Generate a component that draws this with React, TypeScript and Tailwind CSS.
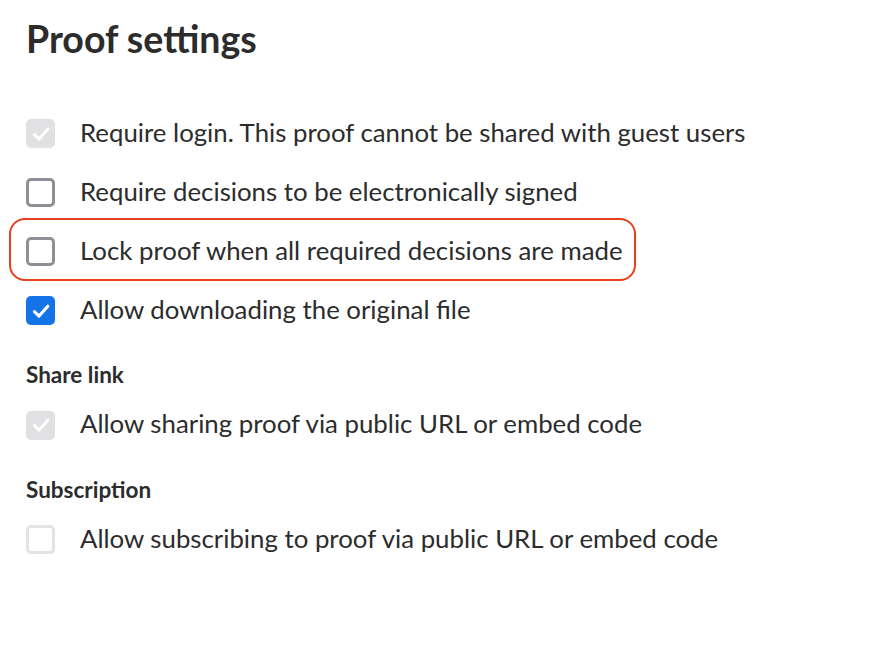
import type { ReactNode } from 'react';

type BoxState = 'checked' | 'unchecked' | 'disabledChecked' | 'disabledUnchecked';

function Check() {
  return (
    <svg width="22" height="22" viewBox="0 0 20 20" fill="none">
      <path
        d="M4 10.5 L8.2 14.6 L16.2 5.6"
        stroke="white"
        strokeWidth="2.8"
        strokeLinecap="round"
        strokeLinejoin="round"
      />
    </svg>
  );
}

function Box({ state }: { state: BoxState }) {
  if (state === 'checked') {
    return (
      <span className="w-[29px] h-[29px] rounded-[5px] bg-[#1473e6] flex items-center justify-center shrink-0">
        <Check />
      </span>
    );
  }
  if (state === 'disabledChecked') {
    return (
      <span className="w-[29px] h-[29px] rounded-[5px] bg-[#e1e1e4] flex items-center justify-center shrink-0">
        <Check />
      </span>
    );
  }
  if (state === 'disabledUnchecked') {
    return (
      <span className="w-[29px] h-[29px] rounded-[5px] border-[3px] border-[#e3e3e6] bg-white shrink-0" />
    );
  }
  return (
    <span className="w-[29px] h-[29px] rounded-[5px] border-[3px] border-[#8f8f96] bg-white shrink-0" />
  );
}

function Row({
  state,
  children,
  highlight,
}: {
  state: BoxState;
  children: ReactNode;
  highlight?: boolean;
}) {
  return (
    <div className="h-[59px] flex items-center">
      <div className="relative inline-flex items-center gap-[25px]">
        {highlight && (
          <span className="absolute -left-[17px] -right-[13px] -top-[19px] -bottom-[15px] rounded-[16px] border-2 border-[#e8401c] pointer-events-none" />
        )}
        <Box state={state} />
        <span className="text-[25.8px] text-[#2c2c2c] leading-none pb-[2px]">{children}</span>
      </div>
    </div>
  );
}

export default function App() {
  return (
    <div className="w-[872px] h-[646px] bg-white pl-[26px] pt-[20px] font-[Lato,sans-serif]">
      <h1 className="text-[37.5px] font-bold text-[#2c2c2c] leading-none mb-[46.5px]">Proof settings</h1>

      <Row state="disabledChecked">Require login. This proof cannot be shared with guest users</Row>
      <Row state="unchecked">Require decisions to be electronically signed</Row>
      <Row state="unchecked" highlight>
        Lock proof when all required decisions are made
      </Row>
      <Row state="checked">Allow downloading the original file</Row>

      <h2 className="text-[22.5px] font-bold text-[#2c2c2c] leading-none mt-[24px] mb-[9px]">Share link</h2>
      <Row state="disabledChecked">Allow sharing proof via public URL or embed code</Row>

      <h2 className="text-[22.5px] font-bold text-[#2c2c2c] leading-none mt-[24px] mb-[9px]">Subscription</h2>
      <Row state="disabledUnchecked">Allow subscribing to proof via public URL or embed code</Row>
    </div>
  );
}
